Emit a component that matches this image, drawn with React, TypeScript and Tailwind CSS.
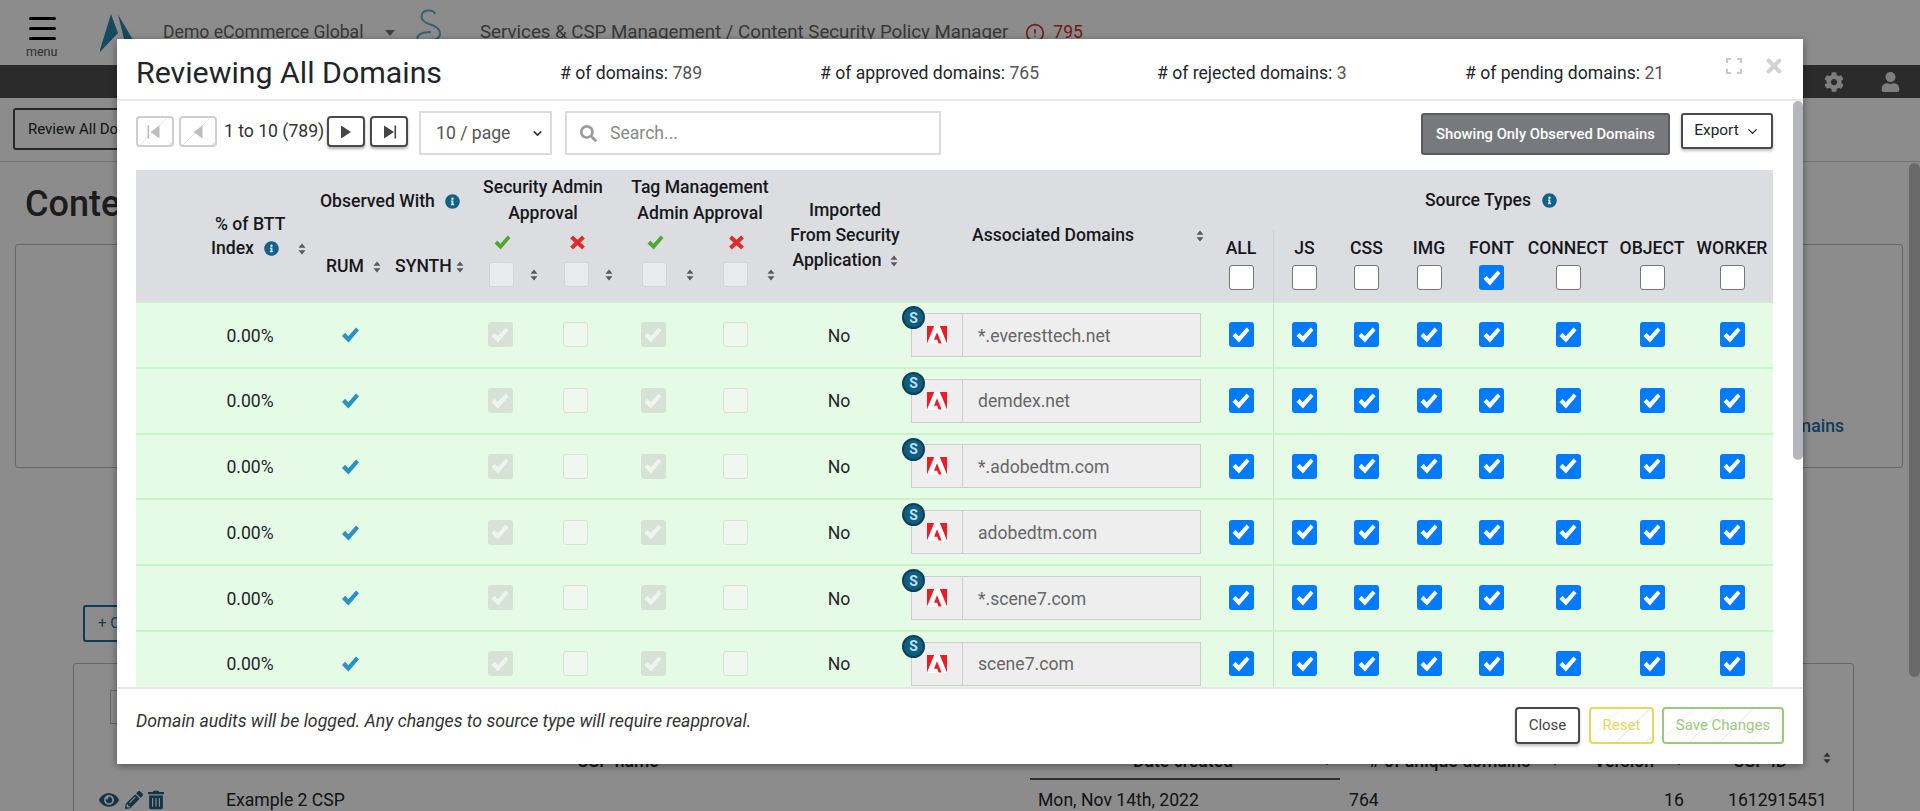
import React from 'react';
import { FaTimes, FaInfoCircle, FaSearch, FaCog, FaUser, FaEye, FaPencilAlt, FaTrashAlt } from 'react-icons/fa';
import { CircleAlert, ChevronDown } from 'lucide-react';

const rowCols = 'grid-cols-[184px_60px_82px_76px_75px_80px_84px_124px_308px_64px_62px_63px_62px_63px_90px_78px_82px]';
const domains = ['*.everesttech.net', 'demdex.net', '*.adobedtm.com', 'adobedtm.com', '*.scene7.com', 'scene7.com'];
const sourceTypes = ['JS', 'CSS', 'IMG', 'FONT', 'CONNECT', 'OBJECT', 'WORKER'];

function Sort({ className = '' }: { className?: string }) {
  return (
    <svg viewBox="0 0 8 12" className={`w-[8px] h-[12px] shrink-0 ${className}`}>
      <path d="M4 0.5 L7.5 4.8 H0.5 Z M4 11.5 L7.5 7.2 H0.5 Z" fill="#55585c" />
    </svg>
  );
}

function Info({ className = '' }: { className?: string }) {
  return <FaInfoCircle className={`w-[15px] h-[15px] text-[#0f6289] shrink-0 ${className}`} />;
}

// glyphicon style tick, wide parallelogram strokes
function Tick({ className = '' }: { className?: string }) {
  return (
    <svg viewBox="0 0 18 16" className={className}>
      <path d="M0.5 9 L3.6 5.8 L6.8 9.2 L14.6 0.5 L17.5 3.2 L7 15.5 Z" fill="currentColor" />
    </svg>
  );
}

function Cross({ className = '' }: { className?: string }) {
  return (
    <svg viewBox="0 0 15 14" className={className}>
      <path d="M1.5 1.5 L13.5 12.5 M13.5 1.5 L1.5 12.5" stroke="currentColor" strokeWidth="4" fill="none" />
    </svg>
  );
}

function Box({ variant }: { variant: 'on' | 'off' | 'lockedOn' | 'lockedOff' | 'headOff' | 'headLocked' }) {
  const styles = {
    on: 'bg-[#007bff] text-white',
    off: 'bg-white border border-[#767676]',
    lockedOn: 'bg-[#d6e2d6] text-[#eef5ee]',
    lockedOff: 'bg-[#eef8ee] border border-[#d5e2d5]',
    headOff: 'bg-white border border-[#767676]',
    headLocked: 'bg-[#e9eaed] border border-[#d3d4d8]',
  };
  return (
    <span className={`w-[25px] h-[25px] rounded-[3px] flex items-center justify-center shrink-0 ${styles[variant]}`}>
      {(variant === 'on' || variant === 'lockedOn') && <Tick className="w-[18px] h-[16px]" />}
    </span>
  );
}

function AdobeMark() {
  return (
    <svg viewBox="0 0 20 18" className="w-[20px] h-[18px]">
      <rect width="20" height="18" fill="#fff" />
      <path d="M0 0 H7.2 L0 17.5 Z M12.8 0 H20 V17.5 Z M10 6.2 L14.6 17.5 H11.6 L10.2 13.8 H7 Z" fill="#ed1c24" />
    </svg>
  );
}

function PageButton({ disabled, children }: { disabled?: boolean; children: React.ReactNode }) {
  return (
    <button
      className={`w-[38px] h-[31px] rounded-[4px] border-2 flex items-center justify-center ${
        disabled
          ? 'border-[#cfcfcf] bg-[repeating-linear-gradient(135deg,#fff,#fff_20px,#e6e6e6_20px,#e6e6e6_21px)]'
          : 'border-[#4a4a4a] bg-white shadow-[0_2px_3px_rgba(0,0,0,0.3)]'
      }`}
    >
      {children}
    </button>
  );
}

function Arrow({ bar, left, color }: { bar?: boolean; left?: boolean; color: string }) {
  return (
    <svg viewBox="0 0 16 16" className="w-[16px] h-[16px]">
      {left ? <path d="M12.5 1.5 V14.5 L3.5 8 Z" fill={color} /> : <path d="M3 1.5 V14.5 L13 8 Z" fill={color} />}
      {bar && <rect x={left ? 0.5 : 13.5} y="1.5" width="1.6" height="13" fill={color} />}
    </svg>
  );
}

function BackgroundPage() {
  return (
    <div className="h-full overflow-hidden bg-white text-[#212529] text-[17.6px]">
      <header className="flex items-center h-[65px]">
        <div className="w-[100px] flex flex-col pl-[29px] pt-[11px]">
          <span className="w-[27px] h-[3.5px] rounded bg-black" />
          <span className="w-[27px] h-[3.5px] rounded bg-black mt-[6.5px]" />
          <span className="w-[27px] h-[3.5px] rounded bg-black mt-[6.5px]" />
          <span className="text-[12.5px] leading-[14px] text-[#555] -ml-[3px] mt-[5px]">menu</span>
        </div>
        <svg viewBox="0 0 40 40" className="w-[40px] h-[40px]">
          <path d="M11 1 L18 20 L-1 40 Z M18 1.5 L36 32 L26 34 Z" fill="#2a85ad" />
        </svg>
        <span className="ml-[23px] w-[215px] text-[#666] whitespace-nowrap">Demo eCommerce Global</span>
        <span className="ml-[7px] border-x-[5px] border-x-transparent border-t-[6px] border-t-[#777]" />
        <svg viewBox="0 0 26 32" className="w-[26px] h-[32px] ml-[20px] -mt-[17px]" fill="none" stroke="#5fb3c7" strokeWidth="2">
          <path d="M20 6 C19 1.5 9 1 7 6 C5 11 9 14 14 16 C20 18 25 20 25 26 C25 31 18 32 14 32 M2 32 C2 25 10 24 16 24" />
        </svg>
        <span className="ml-[39px] text-[18.7px] text-[#666] whitespace-nowrap">Services &amp; CSP Management / Content Security Policy Manager</span>
        <CircleAlert className="ml-[17px] w-[20px] h-[20px] text-[#d9302c]" />
        <span className="ml-[8px] text-[#d9302c]">795</span>
      </header>
      <div className="h-[33px] bg-[#4f4f4f] flex items-center justify-end pr-[20px] text-[#e6e6e6]">
        <FaCog className="w-[20px] h-[20px] mr-[37px]" />
        <FaUser className="w-[19px] h-[20px]" />
      </div>
      <div className="h-[64px] border-b border-[#cfcfcf] pl-[13px] pt-[10px]">
        <button className="h-[42px] w-[200px] text-left pl-[13px] text-[15px] rounded-[3px] border-2 border-[#4a4a4a] whitespace-nowrap">Review All Domains</button>
      </div>
      <h1 className="pl-[25px] pt-[18px] h-[82px] text-[36px] font-medium leading-[48px] text-[#333]">Content Security Policy Manager</h1>
      <div className="mx-[15px] h-[224px] border border-[#bbb] rounded-[3px] flex items-center justify-end pr-[58px] pt-[140px] w-[1888px]">
        <span className="font-medium text-[#1c6ea4]">Domains</span>
      </div>
      <div className="pl-[83px] pt-[137px]">
        <button className="w-[200px] h-[37px] border-2 border-[#18709a] rounded-[3px] text-left pl-[13px] text-[15px] text-[#18709a]">+ Create New CSP</button>
      </div>
      <div className="ml-[73px] mt-[21px] w-[1781px] h-[200px] border border-[#bbb] rounded-[3px] pl-[25px] whitespace-nowrap">
        <div className="w-[150px] h-[34px] ml-[11px] mt-[26px] border border-[#bbb]" />
        <div className="grid grid-cols-[127px_804px_310px_245px_105px_140px] mt-[24px]">
          <div />
          <div className="h-[32px] pl-[351px] font-medium">CSP name</div>
          <div className="h-[32px] flex items-start border-b-2 border-[#555] font-medium pl-[103px]">
            Date created
            <Sort className="ml-[90px] mt-[6px]" />
          </div>
          <div className="h-[32px] flex items-start font-medium pl-[29px]">
            # of unique domains
            <Sort className="ml-[21px] mt-[6px]" />
          </div>
          <div className="h-[32px] flex items-start font-medium pl-[9px]">
            Version
            <Sort className="ml-[21px] mt-[6px]" />
          </div>
          <div className="h-[32px] flex items-start font-medium pl-[43px]">
            CSP ID
            <Sort className="ml-[36px] mt-[4px]" />
          </div>
          <div className="h-[40px] flex items-center">
            <FaEye className="w-[20px] h-[20px] text-[#1f5f85]" />
            <FaPencilAlt className="w-[18px] h-[18px] ml-[6px] text-[#1f5f85]" />
            <FaTrashAlt className="w-[16px] h-[20px] ml-[5px] text-[#1f5f85]" />
          </div>
          <div className="h-[40px] flex items-center">Example 2 CSP</div>
          <div className="h-[40px] flex items-center pl-[8px]">Mon, Nov 14th, 2022</div>
          <div className="h-[40px] flex items-center pl-[9px]">764</div>
          <div className="h-[40px] flex items-center pl-[79px]">16</div>
          <div className="h-[40px] flex items-center pl-[38px]">1612915451</div>
        </div>
      </div>
    </div>
  );
}

function TableHeader() {
  return (
    <div className="flex h-[133px] shrink-0 bg-[#dcdde1] border-b border-[#c9f3c9] text-[17.6px] leading-[25px] font-medium text-[#16181b] whitespace-nowrap">
      <div className="w-[184px] pl-[75px] pt-[42px]">
        <div className="pl-[4px]">% of BTT</div>
        <div className="flex items-center -mt-[1px]">
          Index
          <Info className="ml-[10px]" />
          <Sort className="ml-[19px]" />
        </div>
      </div>
      <div className="w-[142px] pt-[19px]">
        <div className="flex items-center">
          Observed With
          <Info className="ml-[10px]" />
        </div>
        <div className="flex items-center mt-[40px] pl-[6px]">
          RUM
          <Sort className="ml-[9px]" />
          <span className="ml-[14px]">SYNTH</span>
          <Sort className="ml-[4px]" />
        </div>
      </div>
      <div className="w-[151px] pl-[11px] pt-[4px] relative">
        <div className="text-center leading-[26px] w-[140px]">
          Security Admin
          <br />
          Approval
        </div>
        <div className="flex -ml-[11px] mt-[9px]">
          <div className="w-[75px] pl-[27px]">
            <Tick className="w-[19px] h-[15px] ml-[4px] text-[#4fa82f]" />
            <div className="flex items-center mt-[12px]">
              <Box variant="headLocked" />
              <Sort className="ml-[16px]" />
            </div>
          </div>
          <div className="w-[76px] pl-[27px]">
            <Cross className="w-[15px] h-[15px] ml-[6px] text-[#e02b2b]" />
            <div className="flex items-center mt-[12px]">
              <Box variant="headLocked" />
              <Sort className="ml-[16px]" />
            </div>
          </div>
        </div>
      </div>
      <div className="w-[164px] pl-[10px] pt-[4px]">
        <div className="text-center leading-[26px] w-[154px]">
          Tag Management
          <br />
          Admin Approval
        </div>
        <div className="flex -ml-[10px] mt-[9px]">
          <div className="w-[81px] pl-[29px]">
            <Tick className="w-[19px] h-[15px] ml-[4px] text-[#4fa82f]" />
            <div className="flex items-center mt-[12px]">
              <Box variant="headLocked" />
              <Sort className="ml-[19px]" />
            </div>
          </div>
          <div className="w-[83px] pl-[29px]">
            <Cross className="w-[15px] h-[15px] ml-[6px] text-[#e02b2b]" />
            <div className="flex items-center mt-[12px]">
              <Box variant="headLocked" />
              <Sort className="ml-[19px]" />
            </div>
          </div>
        </div>
      </div>
      <div className="w-[124px] pl-[12px] pt-[28px] text-center">
        Imported
        <br />
        From Security
        <br />
        <span className="inline-flex items-center">
          Application
          <Sort className="ml-[8px]" />
        </span>
      </div>
      <div className="w-[308px] flex items-start justify-between pl-[71px] pr-[5px] pt-[53px]">
        Associated Domains
        <Sort className="mt-[7px]" />
      </div>
      <div className="w-[564px]">
        <div className="h-[60px] flex items-center justify-center pt-[1px]">
          Source Types
          <Info className="ml-[11px]" />
        </div>
        <div className="h-[72px] grid grid-cols-[64px_62px_63px_62px_63px_90px_78px_82px]">
          {['ALL', ...sourceTypes].map((label, i) => (
            <div key={label} className={`flex flex-col items-center pt-[6px] ${i === 1 ? 'border-l border-[#cdced2]' : ''}`}>
              {label}
              <div className="mt-[4px]">
                <Box variant={label === 'FONT' ? 'on' : 'headOff'} />
              </div>
            </div>
          ))}
        </div>
      </div>
    </div>
  );
}

function DomainRow({ domain }: { domain: string }) {
  const cell = 'flex items-center justify-center';
  return (
    <div className={`grid ${rowCols} h-[65.75px] bg-[#e5fbe5] border-b-2 border-[#c9f3c9] text-[17.6px] text-[#212529] shrink-0`}>
      <div className={`${cell} pl-[44px] pt-[2px]`}>0.00%</div>
      <div className={`${cell} pt-[1px]`}>
        <Tick className="w-[19px] h-[16px] text-[#2692c6]" />
      </div>
      <div />
      <div className={cell}><Box variant="lockedOn" /></div>
      <div className={cell}><Box variant="lockedOff" /></div>
      <div className={cell}><Box variant="lockedOn" /></div>
      <div className={cell}><Box variant="lockedOff" /></div>
      <div className={`${cell} pt-[2px]`}>No</div>
      <div className="flex items-center pl-[10px] relative">
        <span className="absolute left-[1px] top-[3px] w-[23px] h-[23px] rounded-full bg-[#0f5e80] border-2 border-[#0a4158] text-[#bfe0f0] text-[14px] font-bold leading-none flex items-center justify-center z-10">
          S
        </span>
        <div className="flex w-[290px] h-[44px] bg-[#eeeeee] border border-[#cccccc]">
          <div className="w-[51px] flex items-center justify-center border-r border-[#cccccc]">
            <AdobeMark />
          </div>
          <div className="flex items-center pl-[15px] pt-[2px] text-[#666]">{domain}</div>
        </div>
      </div>
      <div className={cell}><Box variant="on" /></div>
      {sourceTypes.map((t, i) => (
        <div key={t} className={`${cell} ${i === 0 ? 'border-l border-[#cfdccf]' : ''}`}>
          <Box variant="on" />
        </div>
      ))}
    </div>
  );
}

function Modal() {
  return (
    <div className="absolute left-[117px] top-[39px] w-[1686px] h-[725px] bg-white flex flex-col shadow-[0_2px_8px_rgba(0,0,0,0.4)] font-['Roboto',sans-serif]">
      <div className="h-[62px] shrink-0 border-b-2 border-[#e7e7e7] flex items-center pl-[19px] pt-[8px] text-[17.6px] text-[#212529] whitespace-nowrap">
        <h2 className="w-[424px] text-[30.3px] font-normal">Reviewing All Domains</h2>
        <div className="w-[260px]"># of domains: <span className="text-[#555]">789</span></div>
        <div className="w-[337px]"># of approved domains: <span className="text-[#555]">765</span></div>
        <div className="w-[308px]"># of rejected domains: <span className="text-[#555]">3</span></div>
        <div className="w-[261px]"># of pending domains: <span className="text-[#555]">21</span></div>
        <svg viewBox="0 0 16 16" className="w-[16px] h-[16px] -mt-[14px] text-[#bbb]" fill="none" stroke="currentColor" strokeWidth="1.6">
          <path d="M1 5 V1 H5 M11 1 H15 V5 M15 11 V15 H11 M5 15 H1 V11" />
        </svg>
        <FaTimes className="w-[22px] h-[22px] ml-[21px] -mt-[14px] text-[#d2d2d2]" />
      </div>

      <div className="flex-1 overflow-hidden relative pl-[19px] pr-[30px] flex flex-col">
        <div className="h-[69px] shrink-0 flex items-start pt-[10px] text-[17.6px] text-[#212529] whitespace-nowrap">
          <div className="flex items-center mt-[5px]">
            <PageButton disabled><Arrow bar left color="#bdbdbd" /></PageButton>
            <span className="w-[5px]" />
            <PageButton disabled><Arrow left color="#bdbdbd" /></PageButton>
            <span className="w-[110px] pl-[7px] text-[#333]">1 to 10 (789)</span>
            <PageButton><Arrow color="#444" /></PageButton>
            <span className="w-[5px]" />
            <PageButton><Arrow bar color="#444" /></PageButton>
          </div>
          <div className="ml-[11px] w-[133px] h-[44px] border-2 border-[#dcdcdc] flex items-center justify-between pl-[15px] pr-[6px] text-[#555]">
            10 / page
            <ChevronDown className="w-[13px] h-[13px] text-[#333]" strokeWidth={3} />
          </div>
          <div className="ml-[13px] w-[376px] h-[44px] border-2 border-[#dcdcdc] flex items-center pl-[13px] text-[#8a8a8a]">
            <FaSearch className="w-[17px] h-[17px] text-[#9c9c9c]" />
            <span className="ml-[13px]">Search...</span>
          </div>
          <button className="ml-auto mt-[2px] w-[249px] h-[42px] rounded-[3px] bg-[#78797c] border-2 border-[#5a5b5e] text-white text-[14.8px] font-medium">
            Showing Only Observed Domains
          </button>
          <button className="ml-[11px] mt-[2px] w-[92px] h-[36px] rounded-[3px] bg-white border-2 border-[#4a4a4a] shadow-[0_2px_3px_rgba(0,0,0,0.25)] text-[15.4px] flex items-center justify-center">
            Export
            <ChevronDown className="w-[15px] h-[15px] ml-[6px]" />
          </button>
        </div>
        <TableHeader />
        {domains.map((d) => (
          <DomainRow key={d} domain={d} />
        ))}
        <div className="absolute top-0 right-0 w-[10px] h-[359px] rounded-full bg-[#b5b6bc]" />
      </div>

      <div className="h-[77px] shrink-0 border-t-2 border-[#e7e7e7] flex items-start pl-[19px] pr-[19px] pt-[18px]">
        <em className="text-[17.7px] text-[#333] mt-[1px]">Domain audits will be logged. Any changes to source type will require reapproval.</em>
        <button className="ml-auto w-[65px] h-[37px] rounded-[4px] border-2 border-[#4a4a4a] bg-white shadow-[0_2px_3px_rgba(0,0,0,0.25)] text-[15px] text-[#444]">Close</button>
        <button className="ml-[9px] w-[65px] h-[37px] rounded-[4px] border-2 border-[#e2d95f] text-[15px] text-[#e2d95f] bg-[repeating-linear-gradient(135deg,#fff,#fff_20px,#efefef_20px,#efefef_21px)]">Reset</button>
        <button className="ml-[8px] w-[122px] h-[37px] rounded-[4px] border-2 border-[#9cc97e] text-[15px] text-[#9cc97e] bg-[repeating-linear-gradient(135deg,#fff,#fff_20px,#efefef_20px,#efefef_21px)]">Save Changes</button>
      </div>
    </div>
  );
}

export default function App() {
  return (
    <div className="relative h-screen overflow-hidden font-['Roboto',sans-serif]">
      <BackgroundPage />
      <div className="absolute inset-0 bg-black/45" />
      <div className="absolute right-0 top-[163px] w-[11px] h-[514px] rounded-full bg-[#6a6a6a]" />
      <Modal />
    </div>
  );
}
